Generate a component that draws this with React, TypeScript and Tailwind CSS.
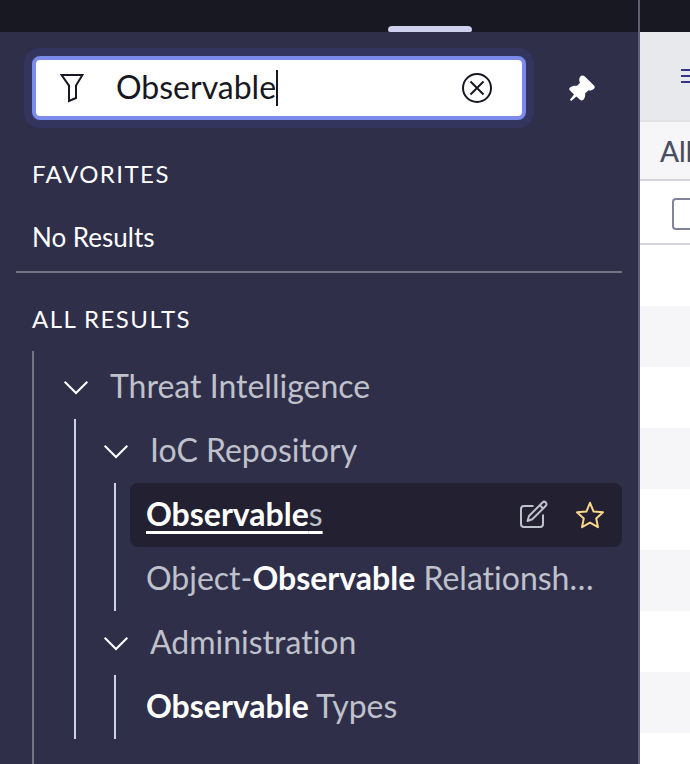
import { useState } from 'react'
import type { ReactNode } from 'react'

interface TreeLeaf {
  id: string
  label: string
  active?: boolean
}

interface TreeSection {
  id: string
  label: string
  items: TreeLeaf[]
}

const sections: TreeSection[] = [
  {
    id: 'ioc-repository',
    label: 'IoC Repository',
    items: [
      { id: 'observables', label: 'Observables', active: true },
      { id: 'object-observable', label: 'Object-Observable Relationships' },
    ],
  },
  {
    id: 'administration',
    label: 'Administration',
    items: [{ id: 'observable-types', label: 'Observable Types' }],
  },
]

const listRows = [1, 2, 3, 4, 5, 6, 7, 8, 9]

const FilterIcon = () => (
  <svg className="h-8 w-8 shrink-0" viewBox="0 0 32 32" fill="none" stroke="currentColor" strokeWidth="2">
    <path d="M5.6 3H26.4L20 13.6V26L13 29V13.6Z" />
  </svg>
)

const ClearIcon = () => (
  <svg className="h-8 w-8" viewBox="0 0 32 32" fill="none" stroke="currentColor" strokeWidth="2">
    <circle cx="15" cy="16" r="14" />
    <path d="M8.5 9.5l13 13M21.5 9.5l-13 13" />
  </svg>
)

const PinIcon = () => (
  <svg className="h-7 w-7" viewBox="0 0 28 28" fill="currentColor">
    <path d="M11.2 5.2C11.4 3.6 12.6 1.9 14 1.6C15.2 1.4 16 1.9 16.8 2.6L26 11.6C27 12.6 27 13.6 26.2 14.6C25 16.2 23 16.8 20.6 16.2L17.2 19.2C17.4 21.8 16.8 24.2 15.4 25.8C14.4 26.8 13 26.8 12 25.8L8.4 22.4L3.2 27L1.9 25.8L6 20.4L2 16.4C1 15.4 1 14.4 2 13.4C4 11.6 6.6 11.4 9.2 11.8L12 8.8C11.4 7.6 11.1 6.4 11.2 5.2Z" />
  </svg>
)

const ChevronIcon = () => (
  <svg className="h-4 w-6 shrink-0" viewBox="0 0 24 16" fill="none" stroke="currentColor" strokeWidth="2">
    <path d="M.7 2.7L12 14L23.3 2.7" />
  </svg>
)

const EditIcon = () => (
  <svg className="h-8 w-8" viewBox="0 0 32 32" fill="none" stroke="currentColor" strokeWidth="2" strokeLinejoin="round">
    <path d="M15.5 7H6a3 3 0 0 0-3 3V25a3 3 0 0 0 3 3H22a3 3 0 0 0 3-3V15.500" />
    <path d="M9.500 22L11 17L24.500 3.500a2.200 2.200 0 0 1 3.300 3.300L14.300 20.300Z" />
    <path d="M21.800 6.200l3.300 3.300" />
  </svg>
)

const StarIcon = () => (
  <svg className="h-8 w-8" viewBox="0 0 32 32" fill="none" stroke="currentColor" strokeWidth="2" strokeLinejoin="round">
    <path d="M16 3.8L19.600 12.6L29 13.3L22.200 19.400L24 28.200L16 23.600L8 28.200L9.800 19.400L3 13.300L12.400 12.600Z" />
  </svg>
)

const MenuIcon = () => (
  <svg className="h-8 w-8 shrink-0" viewBox="0 0 32 32" fill="none" stroke="currentColor" strokeWidth="2">
    <path d="M5 10H27M5 16H27M5 22H27" />
  </svg>
)

// Bold the part of the label that matches the filter
const highlight = (label: string, term: string) => {
  const start = term ? label.indexOf(term) : -1
  if (start < 0) return label
  return (
    <>
      {label.slice(0, start)}
      <b className="font-bold text-white">{term}</b>
      {label.slice(start + term.length)}
    </>
  )
}

function GroupRow({ children }: { children: ReactNode }) {
  return (
    <button
      type="button"
      aria-expanded="true"
      className="flex h-16 w-full items-center gap-[22px] pl-7 text-left"
    >
      <ChevronIcon />
      <span className="truncate pb-0.5 text-[32px] leading-10 text-[#bfc1cb]">{children}</span>
    </button>
  )
}

function LeafRow({ item, term }: { item: TreeLeaf; term: string }) {
  return (
    <li
      className={`mr-4 ml-[14px] flex h-16 items-center rounded-lg px-4 ${
        item.active ? 'bg-[#222031]' : ''
      }`}
    >
      <a
        href={`#${item.id}`}
        className={`mr-2 min-w-0 flex-1 truncate pb-0.5 text-[32px] leading-10 text-[#bfc1cb] ${
          item.active ? 'underline decoration-white decoration-[3px] underline-offset-[5px]' : ''
        }`}
      >
        {highlight(item.label, term)}
      </a>
      {item.active && (
        <div className="flex shrink-0 gap-6">
          <button type="button" aria-label="Edit module" className="text-[#bfc1cb]">
            <EditIcon />
          </button>
          <button type="button" aria-label="Add to favorites" className="text-[#fcd68a]">
            <StarIcon />
          </button>
        </div>
      )}
    </li>
  )
}

export default function App() {
  const [term, setTerm] = useState('Observable')

  return (
    <div className="flex min-h-screen bg-white font-['Lato',sans-serif] [font-variant-ligatures:none]">
      <aside className="flex w-160 min-w-0 flex-col border-r-2 border-[#605e70] bg-[#302f4a] text-white">
        <div className="flex h-8 items-end justify-end bg-[#181822] pr-[166px]">
          <div className="h-1.5 w-21 rounded-t-sm rounded-b-xs bg-[#cfd0ee]" />
        </div>

        <div className="flex items-center gap-4 pt-6 pr-4 pl-8">
          <div className="flex h-16 min-w-0 flex-1 items-center rounded-lg border-4 border-[#7c8aea] bg-white pr-7 pl-5 text-[#181822] ring-8 ring-[#34355f]">
            <FilterIcon />
            <label htmlFor="nav-filter" className="sr-only">
              Filter
            </label>
            <div className="ml-7 flex min-w-0 flex-1 items-center">
              <input
                id="nav-filter"
                type="text"
                value={term}
                onChange={(e) => setTerm(e.target.value)}
                className="field-sizing-content min-w-0 pb-0.5 text-[32px] leading-10 caret-transparent outline-none"
              />
              <span className="h-9 w-0.5 shrink-0 bg-[#181822]" />
            </div>
            <button type="button" aria-label="Clear filter" onClick={() => setTerm('')}>
              <ClearIcon />
            </button>
          </div>
          <button type="button" aria-label="Pin menu" className="flex w-20 justify-center">
            <PinIcon />
          </button>
        </div>

        <section className="mx-4 border-b-2 border-[#757483] px-4 pt-[38px] pb-[18px]">
          <h2 className="text-2xl leading-8 tracking-[0.06em]">FAVORITES</h2>
          <p className="pt-[31px] text-[26px] leading-8">No Results</p>
        </section>

        <section className="flex flex-1 flex-col pt-[30px]">
          <h2 className="pl-8 text-2xl leading-8 tracking-[0.06em]">ALL RESULTS</h2>
          <ul className="mt-4 ml-8 flex-1 border-l-2 border-[#757483] pt-1 pl-0.5">
            <li>
              <GroupRow>Threat Intelligence</GroupRow>
              <ul className="ml-[38px] border-l-2 border-[#cfd0ee]">
                {sections.map((section) => (
                  <li key={section.id}>
                    <GroupRow>{section.label}</GroupRow>
                    <ul className="ml-[38px] border-l-2 border-[#cfd0ee]">
                      {section.items.map((item) => (
                        <LeafRow key={item.id} item={item} term={term} />
                      ))}
                    </ul>
                  </li>
                ))}
              </ul>
            </li>
          </ul>
        </section>
      </aside>

      <main className="min-w-0 flex-1 overflow-hidden">
        <div className="h-8 bg-[#181822]" />
        <div className="flex h-[90px] items-center border-b-2 border-[#e2e3e7] bg-[#e8e9ed] pl-9">
          <button type="button" aria-label="List menu" className="text-[#34358a]">
            <MenuIcon />
          </button>
        </div>
        <nav className="flex h-[59px] items-center border-b-2 border-[#d4d4db] bg-[#f6f6f8] pl-5">
          <a href="#all" className="text-[28px] leading-8 font-medium text-[#4a4f60]">
            All
          </a>
        </nav>
        <table className="w-full border-separate border-spacing-0">
          <thead>
            <tr className="h-16">
              <th className="border-b-2 border-[#d4d4db] p-0 pt-1 pl-8 text-left">
                <input
                  type="checkbox"
                  aria-label="Select all"
                  className="block h-8 w-8 appearance-none rounded-sm border-2 border-[#80839a] bg-white"
                />
              </th>
            </tr>
          </thead>
          <tbody>
            {listRows.map((row) => (
              <tr key={row} className="h-[61px] even:bg-[#f6f6f8]">
                <td className="p-0" />
              </tr>
            ))}
          </tbody>
        </table>
      </main>
    </div>
  )
}
